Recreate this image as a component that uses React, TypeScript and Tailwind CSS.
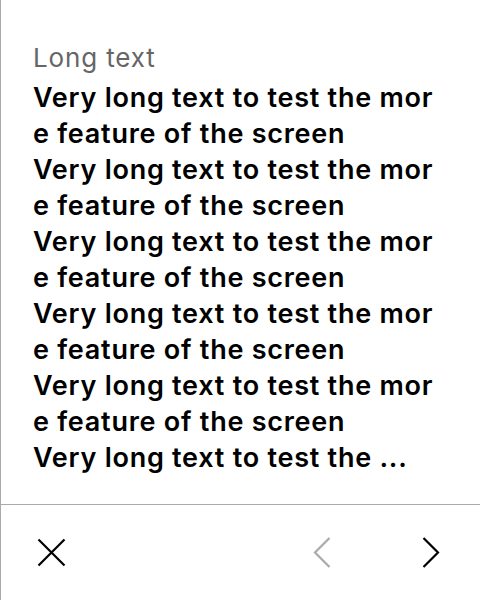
import React from "react";

const lines = [
  "Very long text to test the mor",
  "e feature of the screen",
  "Very long text to test the mor",
  "e feature of the screen",
  "Very long text to test the mor",
  "e feature of the screen",
  "Very long text to test the mor",
  "e feature of the screen",
  "Very long text to test the mor",
  "e feature of the screen",
  "Very long text to test the ...",
];

export default function App() {
  return (
    <div className="flex h-[600px] w-[480px] flex-col border-l border-[#aaaaaa] bg-white font-['Inter',sans-serif]">
      {/* Text block */}
      <div className="flex h-[505px] flex-col border-b border-[#aaaaaa] px-8 pt-[40px]">
        <div className="text-[26px] leading-[36px] tracking-[0.85px] text-[#666666]">Long text</div>
        <div className="mt-[4px] text-[27px] font-semibold leading-[36px] tracking-[0.75px] text-black">
          {lines.map((l, i) => (
            <div key={i} className="whitespace-pre">
              {l}
            </div>
          ))}
        </div>
      </div>

      {/* Footer */}
      <div className="flex flex-1 items-center justify-between pl-[35px] pr-[40px]">
        <button className="flex h-[30px] w-[30px] items-center justify-center">
          <svg width="29" height="29" viewBox="0 0 29 29" fill="none" stroke="black" strokeWidth="2.2">
            <path d="M1.5 1.5 L27.5 27.5 M27.5 1.5 L1.5 27.5" />
          </svg>
        </button>
        <div className="flex items-center gap-[91px]">
          <svg width="18" height="31" viewBox="0 0 18 31" fill="none" stroke="#aaaaaa" strokeWidth="2.2">
            <path d="M16.5 1 L2 15.5 L16.5 30" />
          </svg>
          <svg width="18" height="31" viewBox="0 0 18 31" fill="none" stroke="black" strokeWidth="2.2">
            <path d="M1.5 1 L16 15.5 L1.5 30" />
          </svg>
        </div>
      </div>
    </div>
  );
}
